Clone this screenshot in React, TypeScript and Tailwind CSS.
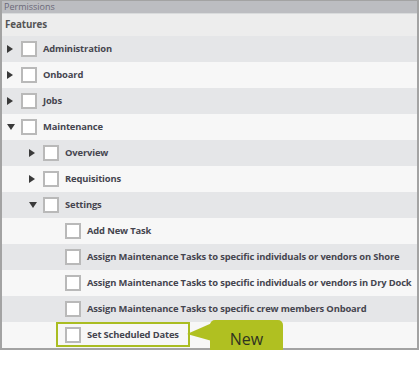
import React from "react";

type Row = { label: string; level: number; toggle?: "right" | "down" };

const rows: Row[] = [
  { label: "Administration", level: 0, toggle: "right" },
  { label: "Onboard", level: 0, toggle: "right" },
  { label: "Jobs", level: 0, toggle: "right" },
  { label: "Maintenance", level: 0, toggle: "down" },
  { label: "Overview", level: 1, toggle: "right" },
  { label: "Requisitions", level: 1, toggle: "right" },
  { label: "Settings", level: 1, toggle: "down" },
  { label: "Add New Task", level: 2 },
  { label: "Assign Maintenance Tasks to specific individuals or vendors on Shore", level: 2 },
  { label: "Assign Maintenance Tasks to specific individuals or vendors in Dry Dock", level: 2 },
  { label: "Assign Maintenance Tasks to specific crew members Onboard", level: 2 },
  { label: "Set Scheduled Dates", level: 2 },
];

const pad: Record<number, string> = { 0: "pl-[5px]", 1: "pl-[27px]", 2: "pl-[49px]" };

function Toggle({ dir }: { dir?: "right" | "down" }) {
  return (
    <div className="w-[14px] h-[16px] shrink-0 flex items-center">
      {dir === "right" && (
        <svg width="6" height="8" viewBox="0 0 6 8">
          <path d="M0 0 L6 4 L0 8 Z" fill="#3a3a3a" />
        </svg>
      )}
      {dir === "down" && (
        <svg width="8" height="6" viewBox="0 0 8 6">
          <path d="M0 0 L8 0 L4 6 Z" fill="#3a3a3a" />
        </svg>
      )}
    </div>
  );
}

export default function App() {
  return (
    <div
      className="relative w-[419px] bg-white"
      style={{ fontFamily: '"Open Sans", "Noto Sans", sans-serif' }}
    >
      <div className="border-t border-l-2 border-r-2 border-b-2 border-[#a3a3a3]">
        <div className="h-[13px] bg-[#bcbdc1] text-[9px] leading-[12px] text-[#6a6878] pl-[2px] border-b border-[#d9dbdc]">
          Permissions
        </div>
        <div className="h-[22px] bg-[#ededed] flex items-center pl-[3px] text-[9.8px] font-bold tracking-[-0.1px] text-[#555]">
          Features
        </div>
        {rows.map((r, i) => (
          <div
            key={i}
            className={`h-[26px] flex items-center ${pad[r.level]} ${i % 2 === 0 ? "bg-[#e5e6e8]" : "bg-[#f7f7f7]"}`}
          >
            <Toggle dir={r.toggle} />
            <div className="w-[16px] h-[16px] shrink-0 border-2 border-[#b9b9b9] bg-white" />
            <span className="ml-[6px] pt-[1px] text-[9.4px] font-bold tracking-[-0.15px] text-[#45454f] whitespace-nowrap">
              {r.label}
            </span>
          </div>
        ))}
      </div>
      <div className="absolute left-[56px] top-[322px] w-[134px] h-[25px] border-2 border-[#aabd22]" />
      <svg className="absolute left-[186px] top-[320px]" width="30" height="24" viewBox="0 0 30 24">
        <path d="M1 14 L26 3 L26 21 Z" fill="#b0c021" />
      </svg>
      <div className="absolute left-[210px] top-[320px] w-[73px] h-[38px] rounded-[5px] bg-[#b0c021] flex items-center justify-center text-[16px] text-[#2f3320]">
        New
      </div>
    </div>
  );
}
